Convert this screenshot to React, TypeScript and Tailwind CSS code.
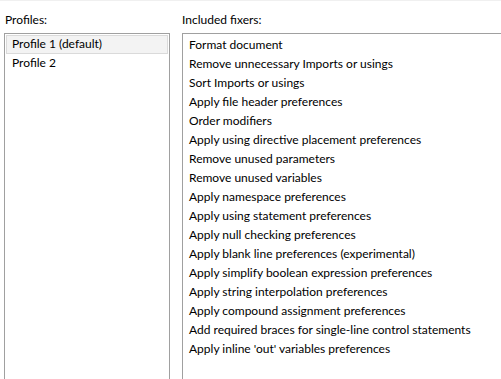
const fixers = [
  'Format document',
  'Remove unnecessary Imports or usings',
  'Sort Imports or usings',
  'Apply file header preferences',
  'Order modifiers',
  'Apply using directive placement preferences',
  'Remove unused parameters',
  'Remove unused variables',
  'Apply namespace preferences',
  'Apply using statement preferences',
  'Apply null checking preferences',
  'Apply blank line preferences (experimental)',
  'Apply simplify boolean expression preferences',
  'Apply string interpolation preferences',
  'Apply compound assignment preferences',
  'Add required braces for single-line control statements',
  "Apply inline 'out' variables preferences",
];

const profiles = ['Profile 1 (default)', 'Profile 2'];

export default function App() {
  return (
    <div className="w-[501px] h-[379px] overflow-hidden bg-white text-[12px] text-black font-['Lato',sans-serif] border-t border-[#f0f0f0]">
      <div className="flex pl-[4px] pt-[10px] gap-[12px]">
        {/* Profiles */}
        <div className="w-[166px] flex flex-col shrink-0">
          <div className="h-[22px] leading-[17px] pl-[1px]">Profiles:</div>
          <div className="h-[400px] border border-[#a0a0a0] p-[1px]">
            {profiles.map((p, i) => (
              <div
                key={p}
                className={
                  i === 0
                    ? 'h-[19px] leading-[16px] px-[5px] bg-[#f3f3f3] border border-[#dadada]'
                    : 'h-[19px] leading-[16px] px-[5px] border border-transparent'
                }
              >
                {p}
              </div>
            ))}
          </div>
        </div>

        {/* Fixers */}
        <div className="flex-1 flex flex-col">
          <div className="h-[22px] leading-[17px]">Included fixers:</div>
          <div className="h-[400px] border border-[#a0a0a0] border-r-0 pt-[1px] pl-[6px]">
            {fixers.map((f) => (
              <div key={f} className="h-[19px] leading-[19px] whitespace-nowrap">
                {f}
              </div>
            ))}
          </div>
        </div>
      </div>
    </div>
  );
}
